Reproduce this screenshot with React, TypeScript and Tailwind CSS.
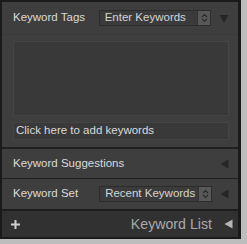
import React from "react";

const Stepper = () => (
  <div className="w-[13px] bg-[#585858] border-l border-[#333] flex items-center justify-center">
    <svg width="7" height="10" viewBox="0 0 7 10">
      <path d="M1 4 L3.5 1.5 L6 4" fill="none" stroke="#2a2a2a" strokeWidth="1.2" />
      <path d="M1 6 L3.5 8.5 L6 6" fill="none" stroke="#2a2a2a" strokeWidth="1.2" />
    </svg>
  </div>
);

const Dropdown = ({ text }: { text: string }) => (
  <div className="flex items-stretch w-[114px] h-[16px] border border-[#2c2c2c] bg-[#3b3b3b]">
    <div className="flex-1 pl-[5px] flex items-center text-[11.5px] text-[#d4d4d4] leading-none">
      {text}
    </div>
    <Stepper />
  </div>
);

const TriLeft = ({ color = "#262626" }: { color?: string }) => (
  <svg width="9" height="10" viewBox="0 0 9 10">
    <path d="M8.5 0.5 L8.5 9.5 L0.5 5 Z" fill={color} />
  </svg>
);

const App = () => {
  return (
    <div
      className="w-[247px] h-[244px] bg-[#bdbdbd]"
      style={{ fontFamily: '"Liberation Sans", Arial, sans-serif' }}
    >
      <div className="w-[241px] h-[239px] bg-[#1a1a1a] pl-[2px] pt-[2px] pr-[3px] pb-[2px] flex flex-col">
        <div className="flex-1 flex flex-col bg-[#3e3e3e]">
          {/* Keyword Tags */}
          <div className="h-[33px] flex items-center pl-[11px] pr-[9px] border-b border-[#393939]">
            <span className="text-[11.5px] text-[#dadada] w-[87px]">Keyword Tags</span>
            <Dropdown text="Enter Keywords" />
            <div className="ml-[8px]">
              <svg width="10" height="9" viewBox="0 0 10 9">
                <path d="M0.5 1 L9.5 1 L5 8.5 Z" fill="#262626" />
              </svg>
            </div>
          </div>
          <div className="flex flex-col pl-[11px] pr-[9px] pt-[6px] pb-[7px] gap-[6px]">
            <div className="h-[75px] bg-[#393939] border border-[#444]" />
            <div className="h-[18px] bg-[#393939] border border-[#444] pl-[2px] flex items-center text-[11.5px] text-[#dadada]">
              Click here to add keywords
            </div>
          </div>
          {/* Keyword Suggestions */}
          <div className="h-[31px] flex items-center pl-[11px] pr-[9px] border-t-2 border-[#202020]">
            <span className="flex-1 text-[11.5px] text-[#dadada]">Keyword Suggestions</span>
            <TriLeft />
          </div>
          {/* Keyword Set */}
          <div className="h-[31px] flex items-center pl-[11px] pr-[9px] border-t border-[#202020]">
            <span className="text-[11.5px] text-[#dadada] w-[87px]">Keyword Set</span>
            <Dropdown text="Recent Keywords" />
            <div className="ml-[8px]">
              <TriLeft />
            </div>
          </div>
          {/* Keyword List */}
          <div className="flex-1 flex items-center bg-[#313131] border-t-2 border-[#1c1c1c] pl-[9px] pr-[5px]">
            <svg width="9" height="9" viewBox="0 0 9 9">
              <path d="M4.5 0 L4.5 9 M0 4.5 L9 4.5" stroke="#cfcfcf" strokeWidth="2" />
            </svg>
            <span className="ml-auto text-[14.2px] text-[#a9a9a9] leading-none">Keyword List</span>
            <div className="ml-[12px]">
              <TriLeft color="#b4b4b4" />
            </div>
          </div>
        </div>
      </div>
    </div>
  );
};

export default App;
